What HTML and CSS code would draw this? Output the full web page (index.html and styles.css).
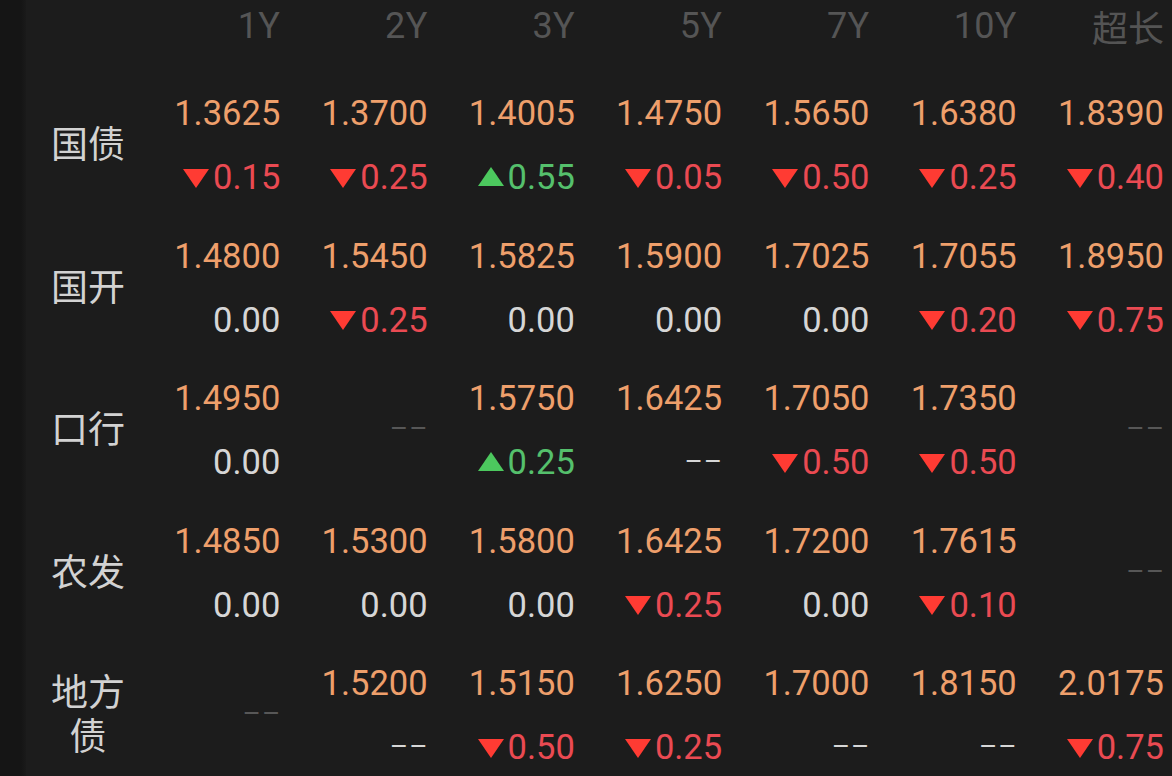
FILE: index.html
```html
<!DOCTYPE html>
<html lang="zh-CN">
<head>
<meta charset="utf-8">
<title>债券收益率</title>
<link rel="stylesheet" href="styles.css">
</head>
<body>
<div class="screen">
  <div class="strip"></div>
  <div class="board">
    <div class="head-label"></div>
    <div class="head">1Y</div>
    <div class="head">2Y</div>
    <div class="head">3Y</div>
    <div class="head">5Y</div>
    <div class="head">7Y</div>
    <div class="head">10Y</div>
    <div class="head cjk">超长</div>

    <!-- 国债 -->
    <div class="label"><span class="ln">国债</span></div>
    <div class="cell"><span class="val">1.3625</span><span class="chg down"><i class="tri"></i>0.15</span></div>
    <div class="cell"><span class="val">1.3700</span><span class="chg down"><i class="tri"></i>0.25</span></div>
    <div class="cell"><span class="val">1.4005</span><span class="chg up"><i class="tri"></i>0.55</span></div>
    <div class="cell"><span class="val">1.4750</span><span class="chg down"><i class="tri"></i>0.05</span></div>
    <div class="cell"><span class="val">1.5650</span><span class="chg down"><i class="tri"></i>0.50</span></div>
    <div class="cell"><span class="val">1.6380</span><span class="chg down"><i class="tri"></i>0.25</span></div>
    <div class="cell"><span class="val">1.8390</span><span class="chg down"><i class="tri"></i>0.40</span></div>

    <!-- 国开 -->
    <div class="label"><span class="ln">国开</span></div>
    <div class="cell"><span class="val">1.4800</span><span class="chg flat">0.00</span></div>
    <div class="cell"><span class="val">1.5450</span><span class="chg down"><i class="tri"></i>0.25</span></div>
    <div class="cell"><span class="val">1.5825</span><span class="chg flat">0.00</span></div>
    <div class="cell"><span class="val">1.5900</span><span class="chg flat">0.00</span></div>
    <div class="cell"><span class="val">1.7025</span><span class="chg flat">0.00</span></div>
    <div class="cell"><span class="val">1.7055</span><span class="chg down"><i class="tri"></i>0.20</span></div>
    <div class="cell"><span class="val">1.8950</span><span class="chg down"><i class="tri"></i>0.75</span></div>

    <!-- 口行 -->
    <div class="label"><span class="ln">口行</span></div>
    <div class="cell"><span class="val">1.4950</span><span class="chg flat">0.00</span></div>
    <div class="cell empty"><span class="none">––</span></div>
    <div class="cell"><span class="val">1.5750</span><span class="chg up"><i class="tri"></i>0.25</span></div>
    <div class="cell"><span class="val">1.6425</span><span class="chg flat dash">––</span></div>
    <div class="cell"><span class="val">1.7050</span><span class="chg down"><i class="tri"></i>0.50</span></div>
    <div class="cell"><span class="val">1.7350</span><span class="chg down"><i class="tri"></i>0.50</span></div>
    <div class="cell empty"><span class="none">––</span></div>

    <!-- 农发 -->
    <div class="label"><span class="ln">农发</span></div>
    <div class="cell"><span class="val">1.4850</span><span class="chg flat">0.00</span></div>
    <div class="cell"><span class="val">1.5300</span><span class="chg flat">0.00</span></div>
    <div class="cell"><span class="val">1.5800</span><span class="chg flat">0.00</span></div>
    <div class="cell"><span class="val">1.6425</span><span class="chg down"><i class="tri"></i>0.25</span></div>
    <div class="cell"><span class="val">1.7200</span><span class="chg flat">0.00</span></div>
    <div class="cell"><span class="val">1.7615</span><span class="chg down"><i class="tri"></i>0.10</span></div>
    <div class="cell empty"><span class="none">––</span></div>

    <!-- 地方债 -->
    <div class="label"><span class="ln wrap">地方债</span></div>
    <div class="cell empty"><span class="none">––</span></div>
    <div class="cell"><span class="val">1.5200</span><span class="chg flat dash">––</span></div>
    <div class="cell"><span class="val">1.5150</span><span class="chg down"><i class="tri"></i>0.50</span></div>
    <div class="cell"><span class="val">1.6250</span><span class="chg down"><i class="tri"></i>0.25</span></div>
    <div class="cell"><span class="val">1.7000</span><span class="chg flat dash">––</span></div>
    <div class="cell"><span class="val">1.8150</span><span class="chg flat dash">––</span></div>
    <div class="cell"><span class="val">2.0175</span><span class="chg down"><i class="tri"></i>0.75</span></div>
  </div>
</div>
</body>
</html>
```

FILE: styles.css
```css
html, body {
  margin: 0;
  padding: 0;
  background: #1c1c1c;
  overflow: hidden;
}

.screen {
  display: flex;
  width: 1172px;
  height: 776px;
  overflow: hidden;
  font-family: Roboto, "Noto Sans CJK SC", sans-serif;
}

.strip {
  width: 26px;
  flex: none;
  background: linear-gradient(to right, #151515 0, #151515 21px, #1a1a1a 26px);
}

.board {
  flex: 1;
  display: grid;
  grid-template-columns: 107px repeat(7, 1fr);
  grid-template-rows: 74px repeat(5, 142.5px);
  padding-right: 8px;
  align-content: start;
}

.head {
  font-size: 36px;
  line-height: 52px;
  color: #555555;
  text-align: right;
  letter-spacing: 0.3px;
}

.head.cjk {
  font-family: "Noto Sans CJK SC", sans-serif;
  font-size: 36px;
  line-height: 52px;
  letter-spacing: 0;
  color: #545454;
}

.label {
  font-family: "Noto Sans CJK SC", sans-serif;
  font-size: 37px;
  color: #d2d2d2;
  padding-left: 17px;
  padding-bottom: 6px;
  display: flex;
  flex-direction: column;
  align-items: center;
  justify-content: center;
}

.label .ln {
  display: block;
  line-height: 44px;
  text-align: center;
}

.label .ln.wrap {
  width: 76px;
}

.cell {
  display: flex;
  flex-direction: column;
  justify-content: center;
  align-items: flex-end;
  font-size: 34.5px;
  line-height: 64px;
}

.val {
  color: #ee9f6b;
}

.chg {
  display: flex;
  align-items: center;
}

.chg.down { color: #ea4a52; }
.chg.up { color: #55c06c; }
.chg.flat { color: #d6d6d6; }

.tri {
  display: inline-block;
  width: 0;
  height: 0;
  margin-right: 4px;
  border-left: 13px solid transparent;
  border-right: 13px solid transparent;
}

.down .tri {
  border-top: 19px solid #ff3b33;
  margin-top: 2px;
}

.up .tri {
  border-bottom: 19px solid #4cc85e;
  margin-top: -2px;
}

.dash {
  letter-spacing: 1px;
  margin-right: -1px;
  font-size: 28px;
}

.none {
  color: #575757;
  font-size: 28px;
  letter-spacing: 1px;
  margin-right: -1px;
  margin-top: -2px;
}
```
